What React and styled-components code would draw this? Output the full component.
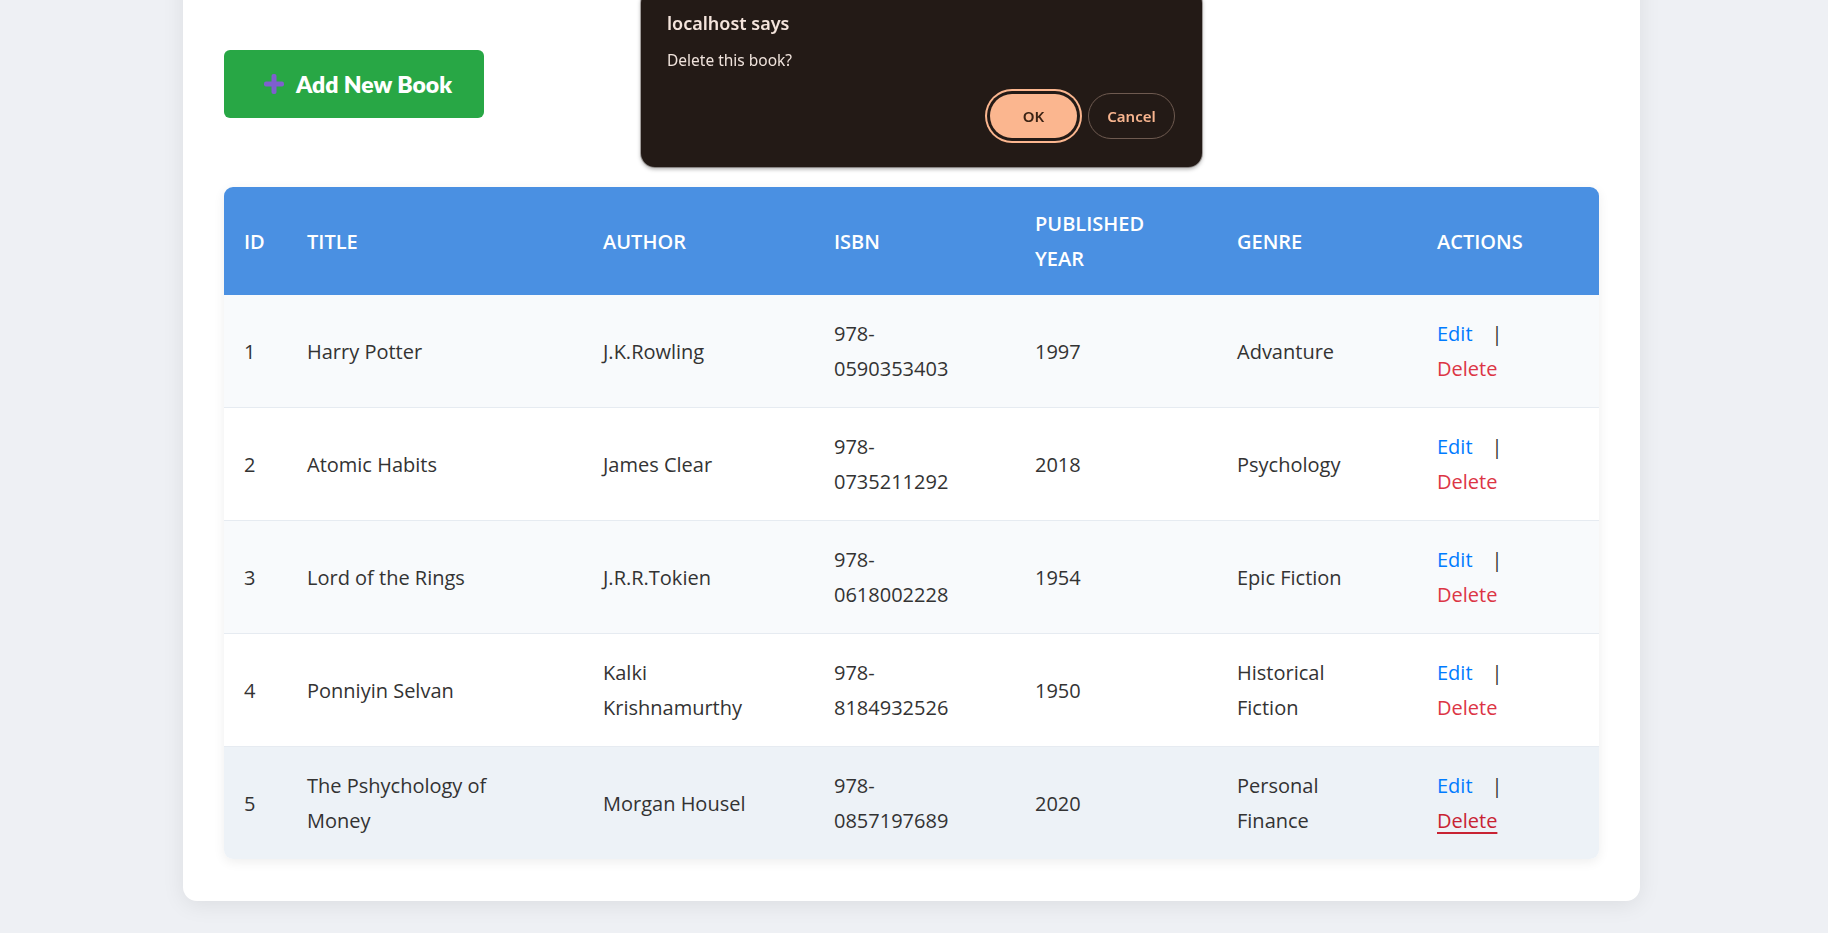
import styled, { createGlobalStyle } from "styled-components";

const books = [
  { id: 1, title: "Harry Potter", author: "J.K.Rowling", isbn: "978-0590353403", year: 1997, genre: "Advanture" },
  { id: 2, title: "Atomic Habits", author: "James Clear", isbn: "978-0735211292", year: 2018, genre: "Psychology" },
  { id: 3, title: "Lord of the Rings", author: "J.R.R.Tokien", isbn: "978-0618002228", year: 1954, genre: "Epic Fiction" },
  { id: 4, title: "Ponniyin Selvan", author: "Kalki Krishnamurthy", isbn: "978-8184932526", year: 1950, genre: "Historical Fiction" },
  { id: 5, title: "The Pshychology of Money", author: "Morgan Housel", isbn: "978-0857197689", year: 2020, genre: "Personal Finance" },
];

const GlobalStyle = createGlobalStyle`
  html, body {
    margin: 0;
    background: #eef0f4;
    font-family: "Open Sans", "Noto Sans", sans-serif;
    color: #333;
  }
`;

const App = () => {
  // index of the row under the mouse in the screenshot
  const hovered = 4;

  return (
    <>
      <GlobalStyle />
      <Page>
        <Card>
          <AddButton>
            <PlusIcon />
            Add New Book
          </AddButton>

          <Table>
            <colgroup>
              <col style={{ width: 63 }} />
              <col style={{ width: 296 }} />
              <col style={{ width: 231 }} />
              <col style={{ width: 201 }} />
              <col style={{ width: 202 }} />
              <col style={{ width: 200 }} />
              <col style={{ width: 182 }} />
            </colgroup>
            <thead>
              <tr>
                <Th>ID</Th>
                <Th>Title</Th>
                <Th>Author</Th>
                <Th>ISBN</Th>
                <Th>Published Year</Th>
                <Th>Genre</Th>
                <Th>Actions</Th>
              </tr>
            </thead>
            <tbody>
              {books.map((b, i) => (
                <Row key={b.id} $striped={i % 2 === 0} $hover={i === hovered}>
                  <Td>{b.id}</Td>
                  <Td>{b.title}</Td>
                  <Td>{b.author}</Td>
                  <Td>
                    {b.isbn.split("-")[0]}-
                    <br />
                    {b.isbn.split("-")[1]}
                  </Td>
                  <Td>{b.year}</Td>
                  <Td>{b.genre}</Td>
                  <Td>
                    <EditLink>Edit</EditLink>
                    <Sep>|</Sep>
                    <DeleteLink $hover={i === hovered}>Delete</DeleteLink>
                  </Td>
                </Row>
              ))}
            </tbody>
          </Table>
        </Card>
      </Page>

      <Dialog>
        <DialogTitle>localhost says</DialogTitle>
        <DialogText>Delete this book?</DialogText>
        <DialogButtons>
          <OkButton>OK</OkButton>
          <CancelButton>Cancel</CancelButton>
        </DialogButtons>
      </Dialog>
    </>
  );
};

const PlusIcon = () => (
  <PlusSvg viewBox="0 0 22 22">
    <rect x="8.5" y="1" width="5" height="20" rx="2" fill="#7f5fcf" />
    <rect x="1" y="8.5" width="20" height="5" rx="2" fill="#7f5fcf" />
  </PlusSvg>
);

const Page = styled.div`
  display: flow-root;
  height: 933px;
  overflow: hidden;
  padding-left: 183px;
`;

const Card = styled.div`
  box-sizing: border-box;
  width: 1457px;
  margin-top: -40px;
  padding: 90px 41px 42px;
  background: #fff;
  border-radius: 14px;
  box-shadow: 0 4px 22px rgba(0, 0, 0, 0.08);
`;

const AddButton = styled.button`
  display: flex;
  align-items: center;
  gap: 11px;
  height: 68px;
  width: 260px;
  padding: 0 0 0 39px;
  margin-bottom: 69px;
  background: #28a745;
  color: #fff;
  border: none;
  border-radius: 6px;
  font-family: Lato, "Noto Sans", sans-serif;
  font-size: 23px;
  font-weight: 800;
  cursor: pointer;
`;

const PlusSvg = styled.svg`
  width: 22px;
  height: 22px;
  flex-shrink: 0;
`;

const Table = styled.table`
  width: 1375px;
  table-layout: fixed;
  border-collapse: separate;
  border-spacing: 0;
  border-radius: 9px;
  overflow: hidden;
  box-shadow: 0 3px 12px rgba(0, 0, 0, 0.07);
  font-size: 20px;
  line-height: 35px;
`;

const Th = styled.th`
  padding: 19px 20px;
  background: #4a90e2;
  color: #fff;
  font-weight: 600;
  text-transform: uppercase;
  text-align: left;
  vertical-align: middle;
`;

const Row = styled.tr`
  background: ${(p) => (p.$hover ? "#edf2f7" : p.$striped ? "#f8fafc" : "#fff")};

  &:last-child td {
    border-bottom: none;
  }
`;

const Td = styled.td`
  padding: 21px 32px 21px 20px;
  border-bottom: 1px solid #e6ebf1;
  vertical-align: middle;
  color: #333;
`;

const EditLink = styled.a`
  color: #007bff;
  margin-right: 19px;
  cursor: pointer;
`;

const Sep = styled.span`
  color: #333;
`;

const DeleteLink = styled.a`
  display: block;
  width: fit-content;
  color: ${(p) => (p.$hover ? "#c82333" : "#dc3545")};
  text-decoration: ${(p) => (p.$hover ? "underline" : "none")};
  text-underline-offset: 4px;
  cursor: pointer;
`;

const Dialog = styled.div`
  position: fixed;
  top: -11px;
  left: 641px;
  box-sizing: border-box;
  width: 561px;
  padding: 22px 27px 26px 26px;
  background: #231a16;
  border-radius: 14px;
  box-shadow: 0 2px 4px rgba(0, 0, 0, 0.35), 0 0 0 1px rgba(120, 110, 105, 0.5);
  font-family: "Noto Sans", "Open Sans", sans-serif;
`;

const DialogTitle = styled.div`
  font-size: 18px;
  font-weight: 600;
  color: #f4e4dc;
  line-height: 24px;
`;

const DialogText = styled.div`
  margin-top: 14px;
  font-size: 15.5px;
  color: #efe2db;
  line-height: 22px;
`;

const DialogButtons = styled.div`
  display: flex;
  justify-content: flex-end;
  align-items: center;
  gap: 11px;
  margin-top: 20px;
`;

const PillButton = styled.button`
  height: 42px;
  border-radius: 21px;
  font-family: "Noto Sans", "Open Sans", sans-serif;
  font-size: 15px;
  font-weight: 600;
  cursor: pointer;
`;

const OkButton = styled(PillButton)`
  width: 87px;
  height: 44px;
  border-radius: 22px;
  margin: 3px 0;
  background: #fbb68f;
  color: #3b2314;
  border: none;
  box-shadow: 0 0 0 3px #231a16, 0 0 0 5px #fbb68f;
`;

const CancelButton = styled(PillButton)`
  width: 87px;
  height: 46px;
  border-radius: 23px;
  background: transparent;
  color: #f8b58f;
  border: 1px solid #6e5a50;
`;

export default App;
